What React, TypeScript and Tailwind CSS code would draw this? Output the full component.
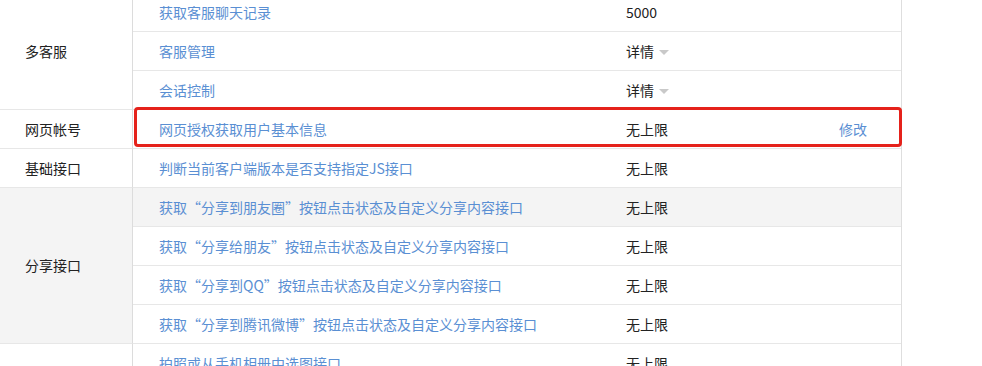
import React from "react";

type Api = { name: string; quota: string; detail?: boolean; edit?: boolean };
type Group = { label: string; apis: Api[]; active?: boolean };

const groups: Group[] = [
  {
    label: "多客服",
    apis: [
      { name: "获取客服聊天记录", quota: "5000" },
      { name: "客服管理", quota: "详情", detail: true },
      { name: "会话控制", quota: "详情", detail: true },
    ],
  },
  { label: "网页帐号", apis: [{ name: "网页授权获取用户基本信息", quota: "无上限", edit: true }] },
  { label: "基础接口", apis: [{ name: "判断当前客户端版本是否支持指定JS接口", quota: "无上限" }] },
  {
    label: "分享接口",
    active: true,
    apis: [
      { name: "获取“分享到朋友圈”按钮点击状态及自定义分享内容接口", quota: "无上限" },
      { name: "获取“分享给朋友”按钮点击状态及自定义分享内容接口", quota: "无上限" },
      { name: "获取“分享到QQ”按钮点击状态及自定义分享内容接口", quota: "无上限" },
      { name: "获取“分享到腾讯微博”按钮点击状态及自定义分享内容接口", quota: "无上限" },
    ],
  },
  {
    label: "图像接口",
    apis: [
      { name: "拍照或从手机相册中选图接口", quota: "无上限" },
      { name: "预览图片接口", quota: "无上限" },
      { name: "上传图片接口", quota: "无上限" },
      { name: "下载图片接口", quota: "无上限" },
    ],
  },
];

function Caret() {
  return (
    <svg width="10" height="5" viewBox="0 0 10 5" className="ml-[5px] inline-block align-middle">
      <path d="M0 0h10L5 5z" fill="#c9c9c9" />
    </svg>
  );
}

export default function App() {
  return (
    <div
      className="relative h-[366px] w-[982px] overflow-hidden bg-white text-[14px] text-[#222]"
      style={{ fontFamily: '"Noto Sans CJK SC", "Microsoft YaHei", sans-serif' }}
    >
      <table className="-mt-[7px] w-[902px] table-fixed border-separate border-spacing-0 border-r border-[#dedede]">
        <colgroup>
          <col className="w-[133px]" />
          <col className="w-[467px]" />
          <col className="w-[213px]" />
          <col />
        </colgroup>
        <tbody>
          {groups.map((g) =>
            g.apis.map((api, i) => {
              const rowBg = g.active && i === 0 ? "bg-[#f4f4f4]" : "";
              return (
                <tr key={g.label + api.name}>
                  {i === 0 && (
                    <td
                      rowSpan={g.apis.length}
                      className={`border-r border-b border-r-[#dcdcdc] border-b-[#e7e7e7] pl-[25px] align-middle ${
                        g.active ? "bg-[#f4f4f4]" : ""
                      }`}
                    >
                      {g.label}
                    </td>
                  )}
                  <td className={`h-[39px] border-b border-[#e7e7e7] pl-[26px] text-[#5a8fd3] ${rowBg}`}>
                    <span className="whitespace-nowrap">{api.name}</span>
                  </td>
                  <td className={`h-[39px] border-b border-[#e7e7e7] pl-[26px] ${rowBg}`}>
                    {api.quota}
                    {api.detail && <Caret />}
                  </td>
                  <td className={`h-[39px] border-b border-[#e7e7e7] pl-[26px] text-[#5a8fd3] ${rowBg}`}>
                    {api.edit ? "修改" : ""}
                  </td>
                </tr>
              );
            })
          )}
        </tbody>
      </table>
      {/* highlight ring around the web-auth row */}
      <div className="pointer-events-none absolute top-[107px] left-[134px] h-[40px] w-[768px] rounded-[4px] border-[3px] border-[#e5221b]" />
    </div>
  );
}
